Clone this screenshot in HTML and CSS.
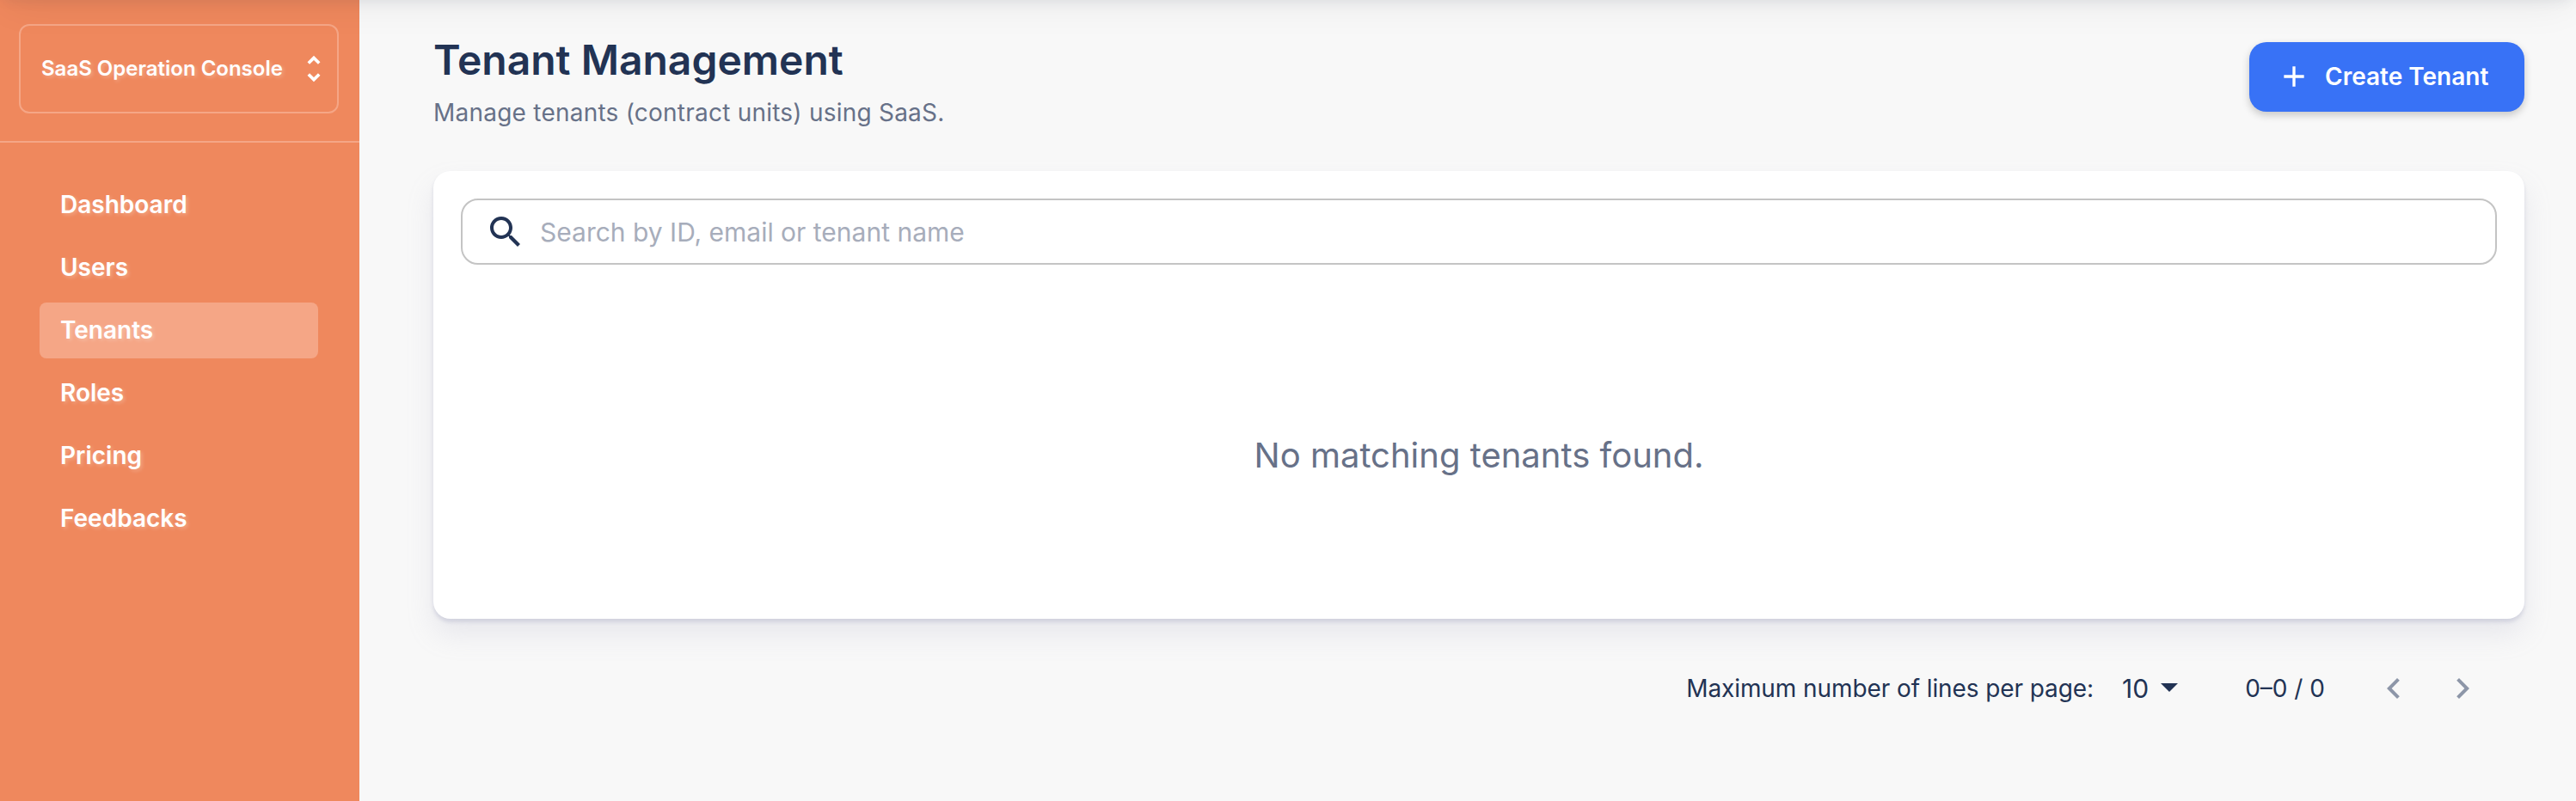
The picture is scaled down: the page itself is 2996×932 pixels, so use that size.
FILE: index.html
```html
<!DOCTYPE html>
<html lang="en">
<head>
<meta charset="utf-8">
<title>Tenant Management</title>
<link rel="stylesheet" href="styles.css">
</head>
<body>
<div class="topbar-shadow"></div>
<div class="app">
  <aside class="sidebar">
    <div class="switcher-wrap">
      <button class="switcher">
        <span>SaaS Operation Console</span>
        <svg width="16" height="32" viewBox="0 0 16 32" fill="none" stroke="currentColor" stroke-width="3.6"><path d="M1.800 9.600 8 3.400l6.200 6.200M1.800 22.400 8 28.600l6.200-6.200"/></svg>
      </button>
    </div>
    <nav class="nav">
      <a class="nav-item">Dashboard</a>
      <a class="nav-item">Users</a>
      <a class="nav-item active">Tenants</a>
      <a class="nav-item">Roles</a>
      <a class="nav-item">Pricing</a>
      <a class="nav-item">Feedbacks</a>
    </nav>
  </aside>
  <main class="main">
    <header class="page-head">
      <div>
        <h1 class="title">Tenant Management</h1>
        <p class="subtitle">Manage tenants (contract units) using SaaS.</p>
      </div>
      <button class="create">
        <svg width="40" height="40" viewBox="0 0 24 24" fill="currentColor"><path d="M19 13h-6v6h-2v-6H5v-2h6V5h2v6h6z"/></svg>
        <span>Create Tenant</span>
      </button>
    </header>
    <section class="card">
      <div class="search">
        <svg width="48" height="48" viewBox="0 0 24 24" fill="currentColor"><path d="M15.500 14h-.79l-.28-.27C15.410 12.590 16 11.110 16 9.500 16 5.910 13.090 3 9.500 3S3 5.910 3 9.500 5.910 16 9.500 16c1.610 0 3.090-.59 4.230-1.570l.27.28v.79l5 4.990L20.490 19l-4.990-5zm-6 0C7.010 14 5 11.990 5 9.500S7.010 5 9.500 5 14 7.010 14 9.500 11.990 14 9.500 14z"/></svg>
        <span class="placeholder">Search by ID, email or tenant name</span>
      </div>
      <p class="empty">No matching tenants found.</p>
    </section>
    <footer class="pager">
      <span class="pager-label">Maximum number of lines per page:</span>
      <span class="pager-size">10</span>
      <svg class="caret" width="48" height="48" viewBox="0 0 24 24" fill="currentColor"><path d="M7 10l5 5 5-5z"/></svg>
      <span class="pager-range">0–0 / 0</span>
      <svg class="prev" width="48" height="48" viewBox="0 0 24 24" fill="currentColor"><path d="M15.410 7.410 14 6l-6 6 6 6 1.410-1.410L10.830 12z"/></svg>
      <svg class="next" width="48" height="48" viewBox="0 0 24 24" fill="currentColor"><path d="M10 6 8.590 7.410 13.170 12l-4.580 4.590L10 18l6-6z"/></svg>
    </footer>
  </main>
</div>
</body>
</html>
```
FILE: styles.css
```css
* { box-sizing: border-box; }
body {
  margin: 0;
  background: #f8f8f8;
  color: #223354;
  font-family: Inter, "Liberation Sans", sans-serif;
  font-size: 28px;
  overflow: hidden;
}
h1, p { margin: 0; }
button { border: 0; background: none; font: inherit; color: inherit; }
svg { flex: none; display: block; }

.topbar-shadow {
  position: absolute;
  top: -160px;
  left: 0;
  width: 100%;
  height: 160px;
  z-index: 2;
  box-shadow: 0 4px 16px -6px rgba(34, 51, 84, .12), 0 10px 44px -8px rgba(0, 0, 0, .08);
}
.app { display: flex; height: 932px; }

.sidebar {
  flex: none;
  width: 418px;
  background: #ef885d;
  color: #fff;
  font-weight: 600;
  text-shadow: 2px 2px 4px rgba(255, 255, 255, .25);
}
.switcher-wrap {
  height: 166px;
  padding: 28px 24px 0 22px;
  border-bottom: 2px solid #f5a686;
}
.switcher {
  display: flex;
  align-items: center;
  justify-content: space-between;
  width: 372px;
  height: 104px;
  padding: 0 19px 1px 24px;
  border: 2px solid #f5a686;
  border-radius: 12px;
  font-size: 24px;
  font-weight: 600;
  text-shadow: inherit;
}
.nav {
  display: grid;
  gap: 8px;
  padding: 40px 48px 0 46px;
}
.nav-item {
  display: flex;
  align-items: center;
  height: 65px;
  padding: 0 0 2px 24px;
  border-radius: 8px;
}
.nav-item.active { background: #f5a686; }

.main { flex: 1; padding: 40px 60px 0 86px; }
.page-head {
  display: flex;
  justify-content: space-between;
  height: 159px;
}
.title { font-size: 48px; line-height: 60px; font-weight: 600; }
.subtitle { margin-top: 12px; line-height: 38px; letter-spacing: .23px; color: #677188; }
.create {
  display: flex;
  align-items: center;
  gap: 16px;
  width: 320px;
  height: 81px;
  margin-top: 9px;
  padding: 0 32px 1px;
  border-radius: 20px;
  background: #3872f6;
  color: #fff;
  font-weight: 600;
  white-space: nowrap;
  box-shadow: 0 4px 10px rgba(0, 0, 0, .2);
}
.card {
  height: 521px;
  padding: 32px;
  border-radius: 20px;
  background: #fff;
  box-shadow: 0 18px 32px rgba(159, 162, 191, .18), 0 4px 4px rgba(159, 162, 191, .32);
}
.search {
  display: flex;
  align-items: center;
  gap: 16px;
  height: 77px;
  padding-left: 26px;
  border: 2px solid #c4c4c4;
  border-radius: 20px;
}
.placeholder { font-size: 30px; color: #a7adbb; }
.empty {
  margin-top: 196px;
  font-size: 40px;
  line-height: 52px;
  text-align: center;
  color: #677188;
}
.pager {
  display: flex;
  align-items: center;
  justify-content: flex-end;
  height: 162px;
  padding-right: 48px;
}
.pager-label { letter-spacing: -.09px; }
.pager-size { margin-left: 33px; font-size: 30px; }
.caret { margin-bottom: 4px; }
.pager-range { margin-left: 64px; }
.prev { margin-left: 56px; color: #8d96a8; }
.next { margin-left: 32px; color: #8d96a8; }
```
